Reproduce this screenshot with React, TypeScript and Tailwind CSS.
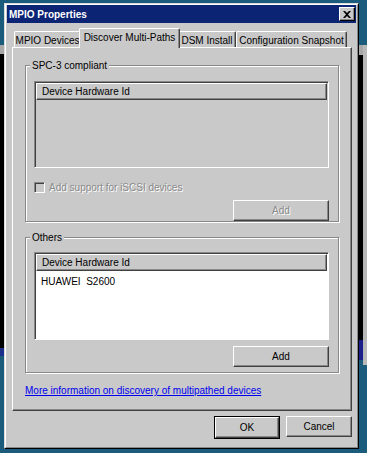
const face = 'bg-[#c9c9c9]';

const raised =
  'border border-t-white border-l-white border-r-[#404040] border-b-[#404040] shadow-[inset_-1px_-1px_0_#888888]';
const sunken =
  'border border-t-[#888888] border-l-[#888888] border-r-white border-b-white shadow-[inset_1px_1px_0_#404040]';

const CloseGlyph = () => (
  <svg width="8" height="7" viewBox="0 0 8 7">
    <path d="M0 0h2l2 2 2-2h2L5 3.5 8 7H6L4 5 2 7H0l3-3.5z" fill="#000" />
  </svg>
);

const Tab = ({ label, active, width }: { label: string; active?: boolean; width: string }) => (
  <div
    className={`${width} flex items-center justify-center border-t border-l border-t-white border-l-white border-r border-r-[#404040] shadow-[inset_-1px_0_0_#888888] rounded-t-[2px] ${face} ${
      active ? 'h-[20px] -mx-[2px] -mb-px relative z-10 pb-[3px]' : 'h-[16px] pt-[1px]'
    }`}
  >
    <span className="whitespace-nowrap">{label}</span>
  </div>
);

const Group = ({ legend, children, box }: { legend: string; children: React.ReactNode; box: string }) => (
  <div className="flex flex-col">
    <span className={`self-start ml-[5px] px-[2px] -mb-[7px] relative z-10 leading-[13px] ${face}`}>{legend}</span>
    <div className={`border border-[#888888] shadow-[1px_1px_0_white,inset_1px_1px_0_white] ${box}`}>{children}</div>
  </div>
);

const ListBox = ({ rows, body, h }: { rows: string[]; body: string; h: string }) => (
  <div className={`${sunken} ${h} ${body} flex flex-col`}>
    <div className={`${raised} ${face} h-[17px] mx-px mt-px flex items-center pl-[5px] border-r-[#303030]`}>
      Device Hardware Id
    </div>
    {rows.map((r) => (
      <div key={r} className="pl-[6px] pt-[4px] leading-[13px] whitespace-pre">
        {r}
      </div>
    ))}
  </div>
);

const Button = ({ label, disabled, w }: { label: string; disabled?: boolean; w: string }) => (
  <button
    disabled={disabled}
    className={`${raised} ${face} ${w} h-[21px] flex items-center justify-center ${
      disabled ? 'text-[#8a8a8a] [text-shadow:1px_1px_0_white]' : 'text-black'
    }`}
  >
    {label}
  </button>
);

export default function App() {
  return (
    <div
      className="w-[367px] h-[453px] bg-[#1b5c7c] flex text-[10px] text-black overflow-hidden"
      style={{ fontFamily: '"Liberation Sans", Arial, sans-serif' }}
    >
      {/* desktop behind the dialog, left side */}
      <div className="w-[4px] flex flex-col">
        <div className="h-[45px]" />
        <div className="h-[9px] bg-[#a8a8a8]" />
        <div className="h-[294px] bg-black" />
        <div className="h-[8px] bg-[#1c2f8a]" />
      </div>

      <div className="flex flex-col pt-[3px]">
        <div className="w-[355px] h-[446px] border border-t-[#dcdcdc] border-l-[#dcdcdc] border-r-black border-b-black">
          <div className={`h-full border border-t-white border-l-white border-r-[#888888] border-b-[#888888] ${face} flex flex-col`}>
            {/* title bar */}
            <div className="h-[18px] mx-px bg-[#0b2474] flex items-center justify-between pl-[2px] pr-[1px]">
              <span className="text-white font-bold text-[10px]">MPIO Properties</span>
              <div className={`${raised} ${face} w-[16px] h-[14px] flex items-center justify-center border-r-black border-b-black`}>
                <CloseGlyph />
              </div>
            </div>

            <div className="flex flex-col pl-[6px] pr-[5px] pt-[5px]">
              {/* tabs */}
              <div className="flex items-end h-[19px] pl-[2px]">
                <Tab label="MPIO Devices" width="w-[67px]" />
                <Tab label="Discover Multi-Paths" width="w-[101px]" active />
                <Tab label="DSM Install" width="w-[58px]" />
                <Tab label="Configuration Snapshot" width="w-[111px]" />
              </div>

              {/* tab page */}
              <div className={`${raised} h-[364px] flex flex-col px-[12px] pt-[11px]`}>
                <Group legend="SPC-3 compliant" box="h-[157px] pt-[15px] pl-[8px] pr-[9px] flex flex-col">
                  <ListBox rows={[]} body={face} h="h-[88px]" />
                  <label className="flex items-center gap-[4px] mt-[12px] text-[#8a8a8a] [text-shadow:1px_1px_0_white]">
                    <span className={`${sunken} w-[11px] h-[11px] ${face}`} />
                    <span>Add support for iSCSI devices</span>
                  </label>
                  <div className="flex justify-end mt-[5px]">
                    <Button label="Add" disabled w="w-[96px]" />
                  </div>
                </Group>

                <div className="h-[9px]" />

                <Group legend="Others" box="h-[136px] pt-[14px] pl-[8px] pr-[9px] flex flex-col">
                  <ListBox rows={['HUAWEI  S2600']} body="bg-white" h="h-[88px]" />
                  <div className="flex justify-end mt-[6px]">
                    <Button label="Add" w="w-[96px]" />
                  </div>
                </Group>

                <a href="#" className="mt-[11px] self-start text-[#0000ee] underline leading-[13px]">
                  More information on discovery of multipathed devices
                </a>
              </div>

              {/* dialog buttons */}
              <div className="flex justify-end gap-[6px] mt-[5px]">
                <div className="border border-black">
                  <Button label="OK" w="w-[64px] h-[19px]" />
                </div>
                <Button label="Cancel" w="w-[66px]" />
              </div>
            </div>
          </div>
        </div>
      </div>

      {/* desktop behind the dialog, right side */}
      <div className="w-[8px] flex">
        <div className="w-[4px] flex flex-col">
          <div className="h-[45px]" />
          <div className="h-[10px] bg-[#a8a8a8]" />
          <div className="h-[285px] bg-black" />
          <div className="h-[20px] bg-[#1c1f8a]" />
        </div>
        <div className="w-[4px] flex flex-col">
          <div className="h-[45px]" />
          <div className="h-[320px] bg-[#b8b8b8]" />
        </div>
      </div>
    </div>
  );
}
